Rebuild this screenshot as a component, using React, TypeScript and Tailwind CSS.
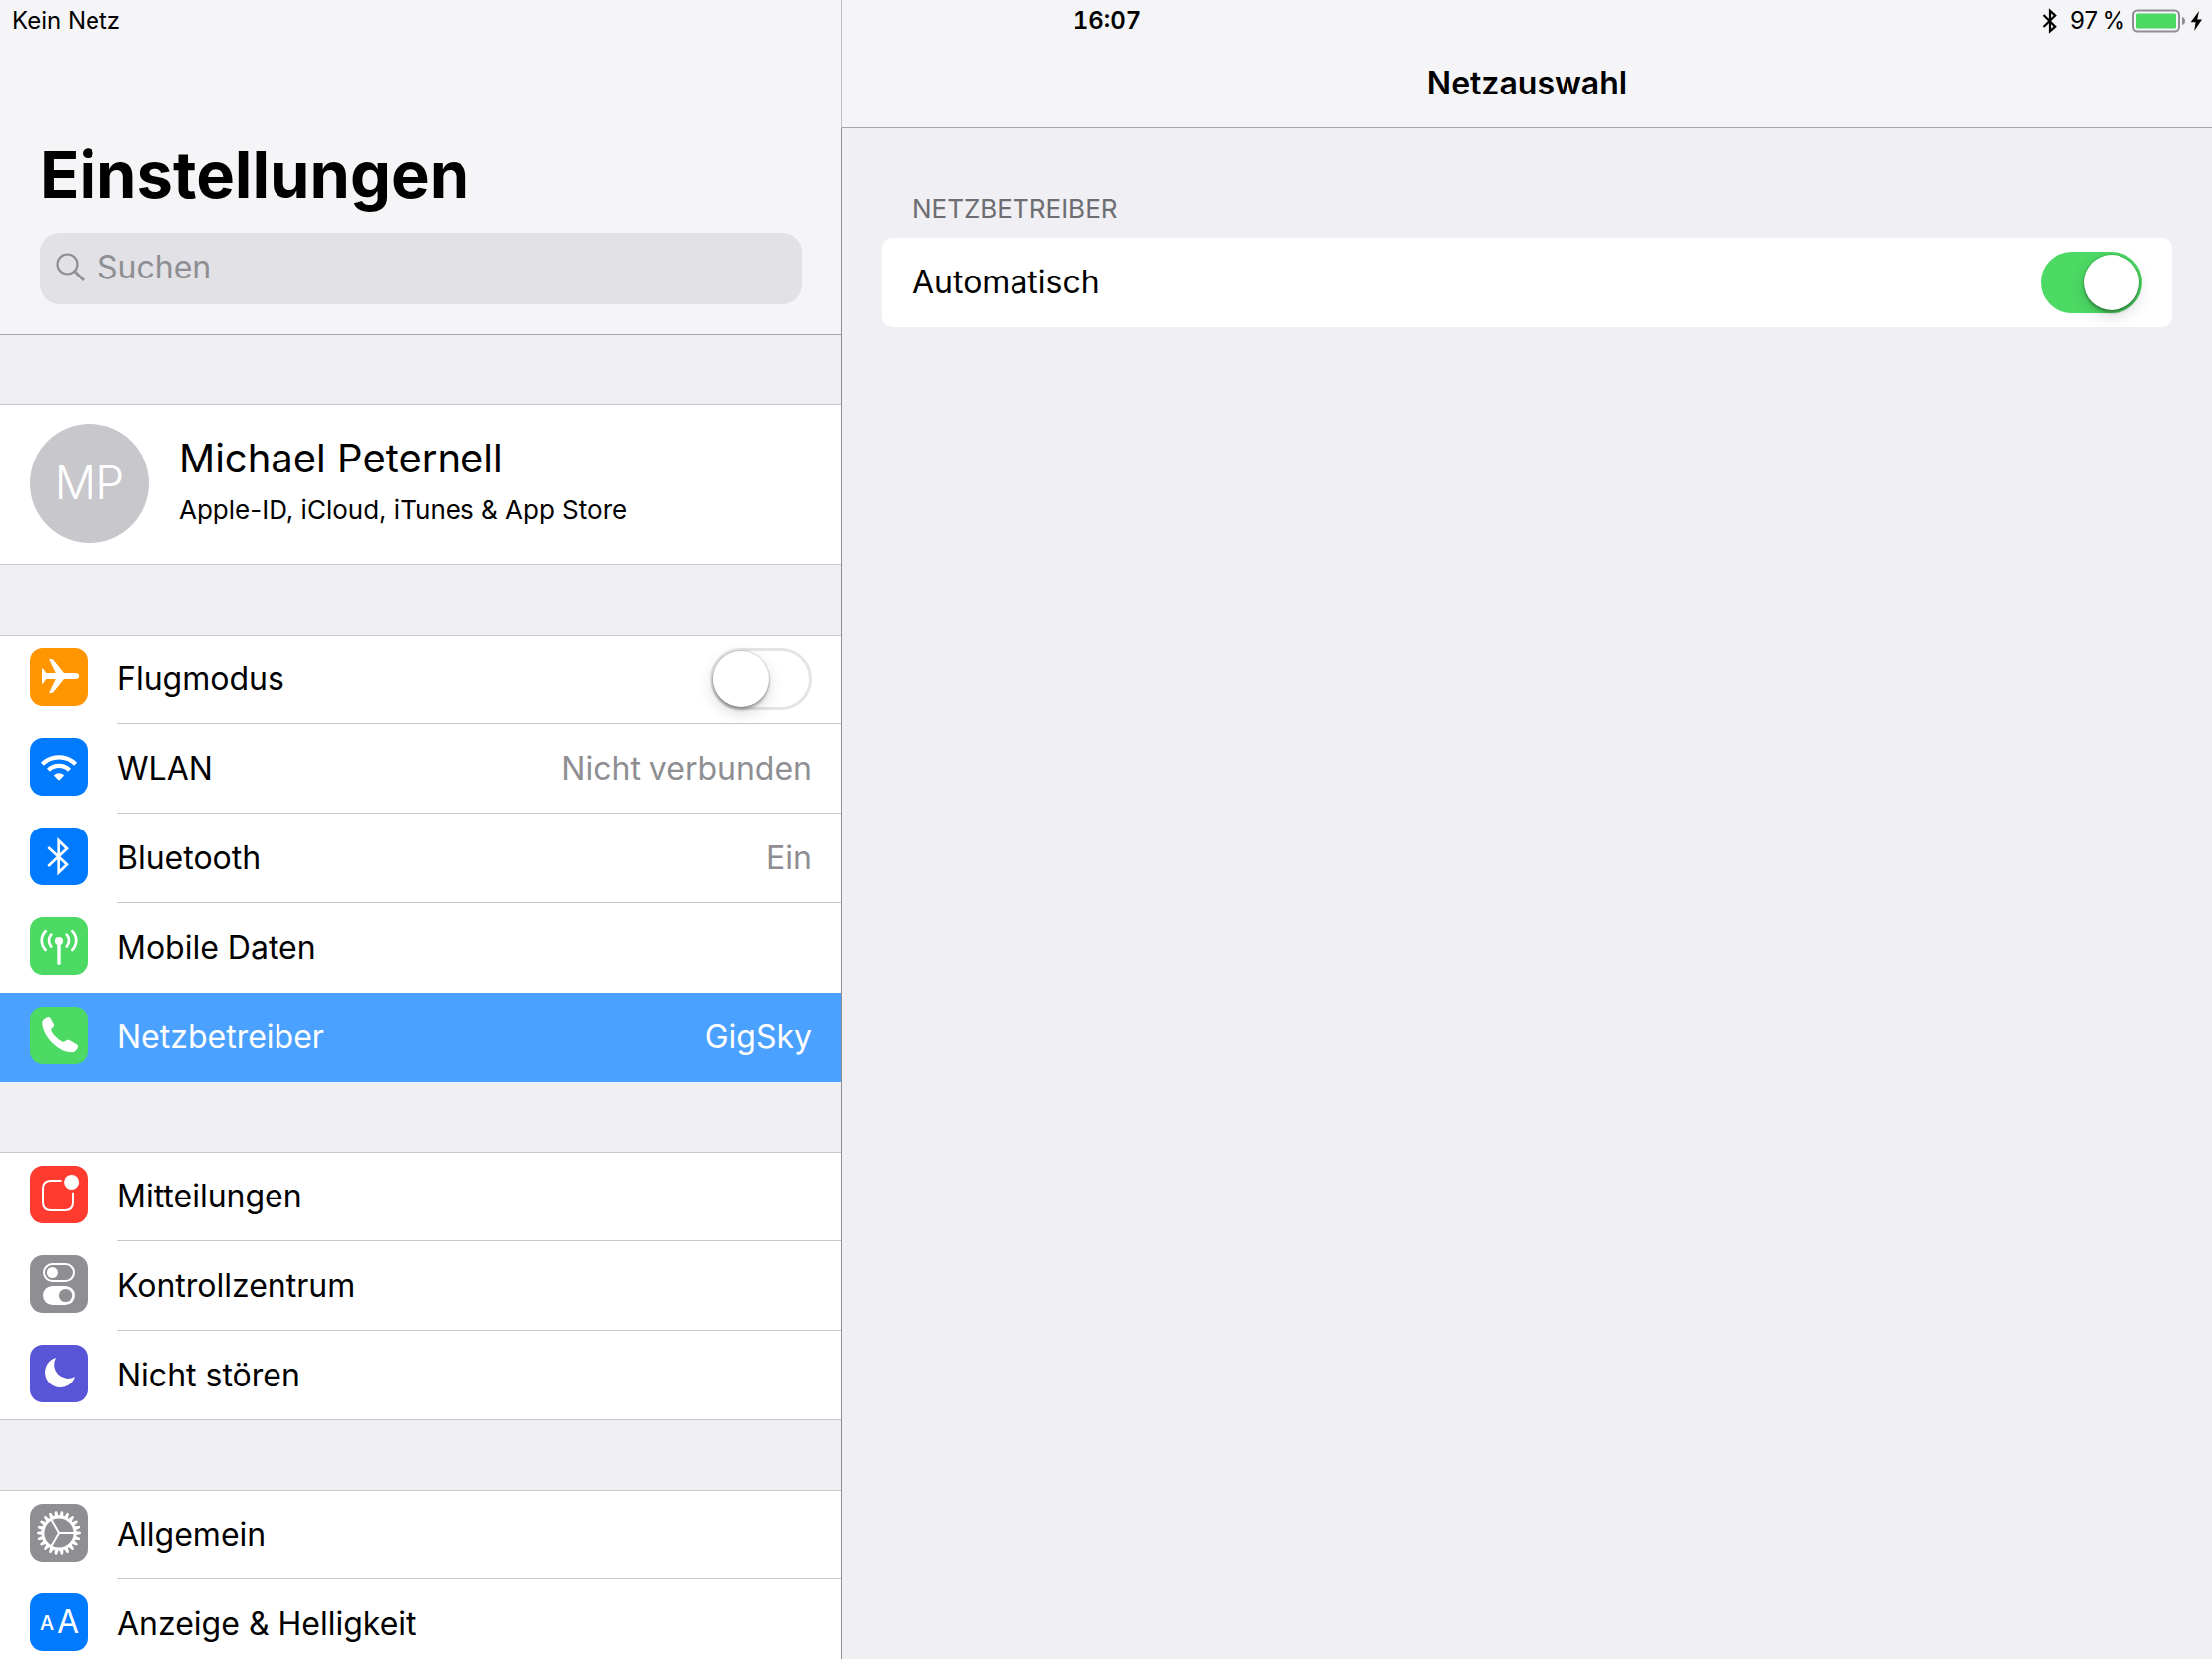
import type { ReactNode } from "react";

const GEAR_TEETH = Array.from({ length: 22 }, (_, i) => (i * 360) / 22);

function Glyph({ children }: { children: ReactNode }) {
  return (
    <svg viewBox="0 0 58 58" className="size-full" fill="none" aria-hidden="true">
      {children}
    </svg>
  );
}

const glyphs = {
  plane: (
    <Glyph>
      <path
        fill="#fff"
        d="M34 25H45.5C47.8 25 49.2 26.3 49.2 28S47.8 31 45.5 31H34L23.3 44.2Q22.5 45 21.5 45H19L25.8 31H16.5L13.2 35.3Q12.7 35.8 12 35.8V20.2Q12.7 20.2 13.2 20.7L16.5 25H25.8L19 11H21.5Q22.5 11 23.3 11.8Z"
      />
    </Glyph>
  ),
  wifi: (
    <Glyph>
      <g stroke="#fff" strokeWidth="4.3">
        <path d="M12.4 26.2A23.5 23.5 0 0 1 45.6 26.2" />
        <path d="M18.5 32.2A14.8 14.8 0 0 1 39.5 32.2" />
      </g>
      <path fill="#fff" d="M29 42.7L23.8 37.4A7.6 7.6 0 0 1 34.2 37.4Z" />
    </Glyph>
  ),
  bluetooth: (
    <Glyph>
      <path
        stroke="#fff"
        strokeWidth="2.7"
        strokeMiterlimit="10"
        d="M18.3 20L37 37.3L28.7 45.4V13.2L37 21.3L18.3 39"
      />
    </Glyph>
  ),
  antenna: (
    <Glyph>
      <circle cx="29" cy="24" r="4.1" fill="#fff" />
      <g stroke="#fff" strokeLinecap="round" strokeWidth="2.7">
        <path strokeWidth="3.4" d="M29 26V46.3" />
        <path d="M21.3 17.6A9 9 0 0 0 21.3 29.6M36.7 17.6A9 9 0 0 1 36.7 29.6" />
        <path d="M15.7 14.2A13.3 13.3 0 0 0 15.7 33M42.3 14.2A13.3 13.3 0 0 1 42.3 33" />
      </g>
    </Glyph>
  ),
  phone: (
    <Glyph>
      <path
        fill="#fff"
        d="M12.3 17C12.3 14 15 12 18 11.2C19 10.9 19.9 11.2 20.4 12.1L23.8 18C24.3 18.9 24.2 19.7 23.6 20.5L21.5 23C21 23.7 21 24.3 21.4 25C23.6 28.9 27.8 33 32.3 35.6C33 36 33.6 35.9 34.2 35.5L37.2 34.1C38 33.7 38.7 33.7 39.5 34.1L47 38.5C48 39.1 48.3 39.8 48 40.8C47.4 43.4 45.4 46 42.3 46.3C28 46.6 12.6 29.3 12.3 17Z"
      />
    </Glyph>
  ),
  notification: (
    <Glyph>
      <path
        stroke="#fff"
        strokeWidth="2"
        d="M31.5 15H21Q13 15 13 23V37Q13 45 21 45H35Q43 45 43 37V26.8"
      />
      <circle cx="41.6" cy="16.4" r="7.5" fill="#fff" />
    </Glyph>
  ),
  control: (
    <Glyph>
      <rect x="14" y="9" width="30" height="17" rx="8.5" stroke="#fff" strokeWidth="2" />
      <circle cx="22.4" cy="17.5" r="5.5" fill="#fff" />
      <rect x="13" y="31" width="32" height="19" rx="9.5" fill="#fff" />
      <circle cx="35.6" cy="40.5" r="6.6" fill="#8e8e93" />
    </Glyph>
  ),
  moon: (
    <Glyph>
      <path fill="#fff" d="M26 13A15.3 15.3 0 1 0 45 32A13.9 13.9 0 0 1 26 13Z" />
    </Glyph>
  ),
  gear: (
    <Glyph>
      <circle cx="29" cy="29" r="16" stroke="#fff" strokeWidth="2.8" />
      <path stroke="#fff" strokeWidth="2" d="M29 29H45M29 29L21 15.1M29 29L21 42.9" />
      {GEAR_TEETH.map((angle) => (
        <path
          key={angle}
          fill="#fff"
          transform={`rotate(${angle} 29 29)`}
          d="M45.5 26.9L50.2 27.8Q51 28 51 29T50.2 30.2L45.5 31.1Z"
        />
      ))}
    </Glyph>
  ),
  text: (
    <Glyph>
      <g fill="#fff" textAnchor="middle" fontFamily="Inter, sans-serif">
        <text x="17" y="36.7" fontSize="20" fontWeight="500">A</text>
        <text x="38" y="39.7" fontSize="32" fontWeight="400">A</text>
      </g>
    </Glyph>
  ),
};

type Item = {
  label: string;
  icon: keyof typeof glyphs;
  color: string;
  value?: string;
  toggle?: boolean;
  selected?: boolean;
};

const groups: Item[][] = [
  [
    { label: "Flugmodus", icon: "plane", color: "bg-[#ff9500]", toggle: true },
    { label: "WLAN", icon: "wifi", color: "bg-[#007aff]", value: "Nicht verbunden" },
    { label: "Bluetooth", icon: "bluetooth", color: "bg-[#007aff]", value: "Ein" },
    { label: "Mobile Daten", icon: "antenna", color: "bg-[#4cd964]" },
    { label: "Netzbetreiber", icon: "phone", color: "bg-[#4cd964]", value: "GigSky", selected: true },
  ],
  [
    { label: "Mitteilungen", icon: "notification", color: "bg-[#ff3b30]" },
    { label: "Kontrollzentrum", icon: "control", color: "bg-[#8e8e93]" },
    { label: "Nicht stören", icon: "moon", color: "bg-[#5856d6]" },
  ],
  [
    { label: "Allgemein", icon: "gear", color: "bg-[#8e8e93]" },
    { label: "Anzeige & Helligkeit", icon: "text", color: "bg-[#007aff]" },
  ],
];

function Toggle({ id, on = false }: { id: string; on?: boolean }) {
  return (
    <input
      id={id}
      type="checkbox"
      role="switch"
      defaultChecked={on}
      className="flex h-[62px] w-[102px] shrink-0 appearance-none items-center rounded-full border-[3px] border-[#e5e5e5] bg-white before:size-[56px] before:rounded-full before:bg-white before:shadow-[0_0_1px_1px_rgba(0,0,0,0.12),0_3px_3px_rgba(0,0,0,0.25),0_6px_16px_rgba(0,0,0,0.15)] before:content-[''] checked:justify-end checked:border-[#4cd964] checked:bg-[#4cd964]"
    />
  );
}

function Row({ item, last }: { item: Item; last: boolean }) {
  const surface = item.selected ? "bg-[#4ba1ff] text-white" : "";
  const outerLine = last && !item.selected ? "border-b border-[#c8c7cc]" : "";
  const innerLine = !last && item.icon !== "antenna" ? "border-b border-[#c8c7cc]" : "";
  const body = (
    <>
      <span className={`mt-[14px] block size-[58px] shrink-0 overflow-hidden rounded-[13px] ${item.color}`}>
        {glyphs[item.icon]}
      </span>
      <span className={`ml-[30px] flex h-full grow items-center justify-between pr-[30px] ${innerLine}`}>
        <span>{item.label}</span>
        {item.value && (
          <span className={item.selected ? "text-white" : "text-[#8e8e93]"}>{item.value}</span>
        )}
        {item.toggle && <Toggle id="flugmodus" />}
      </span>
    </>
  );
  const rowClass = "flex h-full items-start pl-[30px]";
  return (
    <li className={`h-[90px] ${surface} ${outerLine}`}>
      {item.toggle ? (
        <label htmlFor="flugmodus" className={rowClass}>{body}</label>
      ) : (
        <a href="#" aria-current={item.selected ? "page" : undefined} className={rowClass}>{body}</a>
      )}
    </li>
  );
}

function StatusBar() {
  return (
    <div className="absolute inset-x-0 top-0 grid h-[41px] grid-cols-[1fr_auto_1fr] items-center pr-[10px] pl-[12px] text-[24px] leading-none">
      <span>Kein Netz</span>
      <time className="font-semibold tabular-nums">16:07</time>
      <div className="flex items-center justify-end">
        <svg viewBox="0 0 16 26" className="mr-[12px] h-[26px] w-[16px]" fill="none" aria-label="Bluetooth">
          <path stroke="#000" strokeWidth="2.2" strokeMiterlimit="10" d="M1.5 7L13.2 18.6L8 23.2V2.8L13.2 7.6L1.5 19" />
        </svg>
        <span>97{"\u2009"}%</span>
        <svg viewBox="0 0 72 24" className="ml-[5px] h-[24px] w-[72px]" fill="none" aria-label="Batterie lädt">
          <rect x="3" y="1.5" width="46" height="21" rx="4.5" stroke="#8e8e93" strokeWidth="2" />
          <rect x="6" y="4.5" width="40" height="15" rx="1.5" fill="#4cd964" />
          <path fill="#8e8e93" d="M52 8Q55 8.6 55 12T52 16Z" />
          <path fill="#000" d="M69 2L60.6 13.2H65.6L64.2 22L72 10.6H67.2Z" />
        </svg>
      </div>
    </div>
  );
}

export default function App() {
  return (
    <div className="relative grid h-screen grid-cols-[846fr_1378fr] overflow-hidden bg-[#efeff4] font-['Inter',sans-serif] text-[32px] leading-none text-black">
      <aside className="flex min-h-0 min-w-0 flex-col overflow-hidden">
        <header className="shrink-0 border-b border-[#a7a7ab] bg-[#f5f5f8] px-10 pt-[138px] pb-[30px]">
          <h1 className="text-[65px] leading-[76px] font-bold">Einstellungen</h1>
          <label className="mt-5 flex h-[72px] items-center rounded-[20px] bg-[#e1e1e6] pb-[2px] pl-4">
            <svg viewBox="0 0 30 30" className="size-[30px] shrink-0" fill="none" stroke="#8e8e93" strokeWidth="2.2" aria-hidden="true">
              <circle cx="11.5" cy="11.5" r="10" />
              <path strokeWidth="2.8" d="M18.8 18.8L28 28" />
            </svg>
            <input
              type="search"
              aria-label="Suchen"
              placeholder="Suchen"
              className="ml-3 w-full bg-transparent pb-[2px] outline-none placeholder:text-[#8e8e93]"
            />
          </label>
        </header>

        <nav className="flex flex-col gap-[70px] pt-[69px]">
          <a
            href="#"
            className="flex h-[162px] shrink-0 items-start border-y border-[#c8c7cc] bg-white pt-[19px] pl-[30px]"
          >
            <span className="flex size-[120px] shrink-0 items-center justify-center rounded-full bg-[#c7c7cc] pb-[2px] text-[46px] font-light text-white">
              MP
            </span>
            <span className="ml-[30px] flex flex-col pt-2">
              <span className="text-[40px] leading-[54px]">Michael Peternell</span>
              <span className="text-[26px] leading-[50px]">Apple-ID, iCloud, iTunes &amp; App Store</span>
            </span>
          </a>

          {groups.map((items) => (
            <ul key={items[0].label} className="shrink-0 bg-white shadow-[inset_0_1px_0_#c8c7cc]">
              {items.map((item, i) => (
                <Row key={item.label} item={item} last={i === items.length - 1} />
              ))}
            </ul>
          ))}
        </nav>
      </aside>

      <div className="flex min-w-0 flex-col">
        <header className="flex h-[129px] shrink-0 items-end justify-center border-b border-l border-b-[#a7a7ab] border-l-[#c0c0c4] bg-[#f5f5f8] pb-[24px]">
          <h2 className="leading-[40px] font-semibold">Netzauswahl</h2>
        </header>
        <main className="grow border-l border-[#8e8e93] px-10 pt-[64px]">
          <h3 className="px-[30px] text-[26px] leading-[34px] text-[#6d6d72]">NETZBETREIBER</h3>
          <label
            htmlFor="automatisch"
            className="mt-3 flex h-[90px] items-center justify-between rounded-[10px] bg-white px-[30px]"
          >
            <span>Automatisch</span>
            <Toggle id="automatisch" on />
          </label>
        </main>
      </div>

      <StatusBar />
    </div>
  );
}
